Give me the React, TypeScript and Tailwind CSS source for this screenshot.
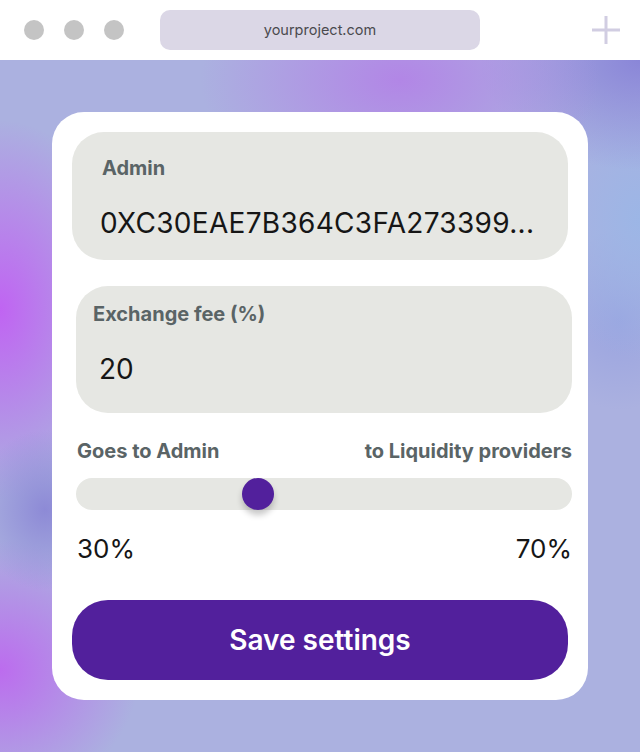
import React from "react";

export default function App() {
  const font = { fontFamily: "Inter, 'Noto Sans', sans-serif" };
  return (
    <div className="w-[640px] h-[752px] flex flex-col overflow-hidden" style={font}>
      {/* Browser bar */}
      <div className="h-[60px] bg-white flex items-center shrink-0">
        <div className="flex items-center gap-[20px] pl-[24px]">
          <div className="w-[20px] h-[20px] rounded-full bg-[#c4c4c4]" />
          <div className="w-[20px] h-[20px] rounded-full bg-[#c4c4c4]" />
          <div className="w-[20px] h-[20px] rounded-full bg-[#c4c4c4]" />
        </div>
        <div className="ml-[36px] w-[320px] h-[40px] rounded-[10px] bg-[#dbd7e6] flex items-center justify-center text-[14.5px] text-[#4a4a4e]">
          yourproject.com
        </div>
        <div className="ml-auto mr-[20px] w-[28px] h-[28px] flex items-center justify-center">
          <svg width="28" height="28" viewBox="0 0 28 28">
            <rect x="12.5" y="0" width="3" height="28" fill="#d1cde2" />
            <rect x="0" y="12.5" width="28" height="3" fill="#d1cde2" />
          </svg>
        </div>
      </div>

      {/* Gradient area */}
      <div className="flex-1 p-[52px] bg-[#abb1e0] bg-[radial-gradient(ellipse_200px_120px_at_400px_20px,#b286e6_0%,rgba(178,134,230,0)_100%),radial-gradient(ellipse_160px_110px_at_640px_0px,#8a86d8_0%,rgba(138,134,216,0)_100%),radial-gradient(ellipse_70px_80px_at_45px_450px,#8d8ad6_0%,rgba(141,138,214,0)_100%),radial-gradient(ellipse_130px_190px_at_0px_250px,#c064f2_0%,rgba(192,100,242,0)_100%),radial-gradient(ellipse_140px_130px_at_0px_610px,#bc6cee_0%,rgba(188,108,238,0)_100%),radial-gradient(ellipse_100px_140px_at_640px_160px,#9cb6e6_0%,rgba(156,182,230,0)_100%),radial-gradient(ellipse_80px_90px_at_620px_260px,#9aa4e0_0%,rgba(154,164,224,0)_100%)]">
        <div className="w-[536px] h-[588px] bg-white rounded-[32px] p-[20px] flex flex-col">
          {/* Admin */}
          <div className="w-[496px] h-[128px] rounded-[32px] bg-[#e6e7e3] pl-[28px] pt-[24px] flex flex-col">
            <div className="ml-[2px] text-[20px] leading-[24px] font-bold text-[#5a6466]">Admin</div>
            <div className="mt-[27px] text-[28px] leading-[32px] tracking-[0.3px] text-[#161616]">
              0XC30EAE7B364C3FA273399...
            </div>
          </div>

          {/* Exchange fee */}
          <div className="mt-[26px] ml-[4px] w-[496px] h-[127px] rounded-[32px] bg-[#e6e7e3] pt-[16px] flex flex-col">
            <div className="pl-[17px] text-[20px] leading-[24px] font-bold text-[#5a6466]">Exchange fee (%)</div>
            <div className="pl-[23px] mt-[27px] text-[28px] leading-[32px] text-[#161616]">20</div>
          </div>

          {/* Slider */}
          <div className="mt-[26px] ml-[4px] w-[496px] flex flex-col">
            <div className="flex justify-between text-[20px] leading-[24px] font-bold text-[#5a6466]">
              <span className="pl-[1px]">Goes to Admin</span>
              <span>to Liquidity providers</span>
            </div>
            <div className="mt-[15px] relative h-[32px] rounded-full bg-[#e6e7e3]">
              <div className="absolute left-[166px] top-0 w-[32px] h-[32px] rounded-full bg-[#52209c] shadow-[0_5px_6px_rgba(0,0,0,0.22)]" />
            </div>
            <div className="mt-[23px] flex justify-between text-[26px] leading-[32px] text-[#161616]">
              <span className="pl-[1px]">30%</span>
              <span>70%</span>
            </div>
          </div>

          {/* Button */}
          <button className="mt-[35px] w-[496px] h-[80px] rounded-[36px] bg-[#52209c] text-white text-[28px] font-semibold flex items-center justify-center">
            Save settings
          </button>
        </div>
      </div>
    </div>
  );
}
